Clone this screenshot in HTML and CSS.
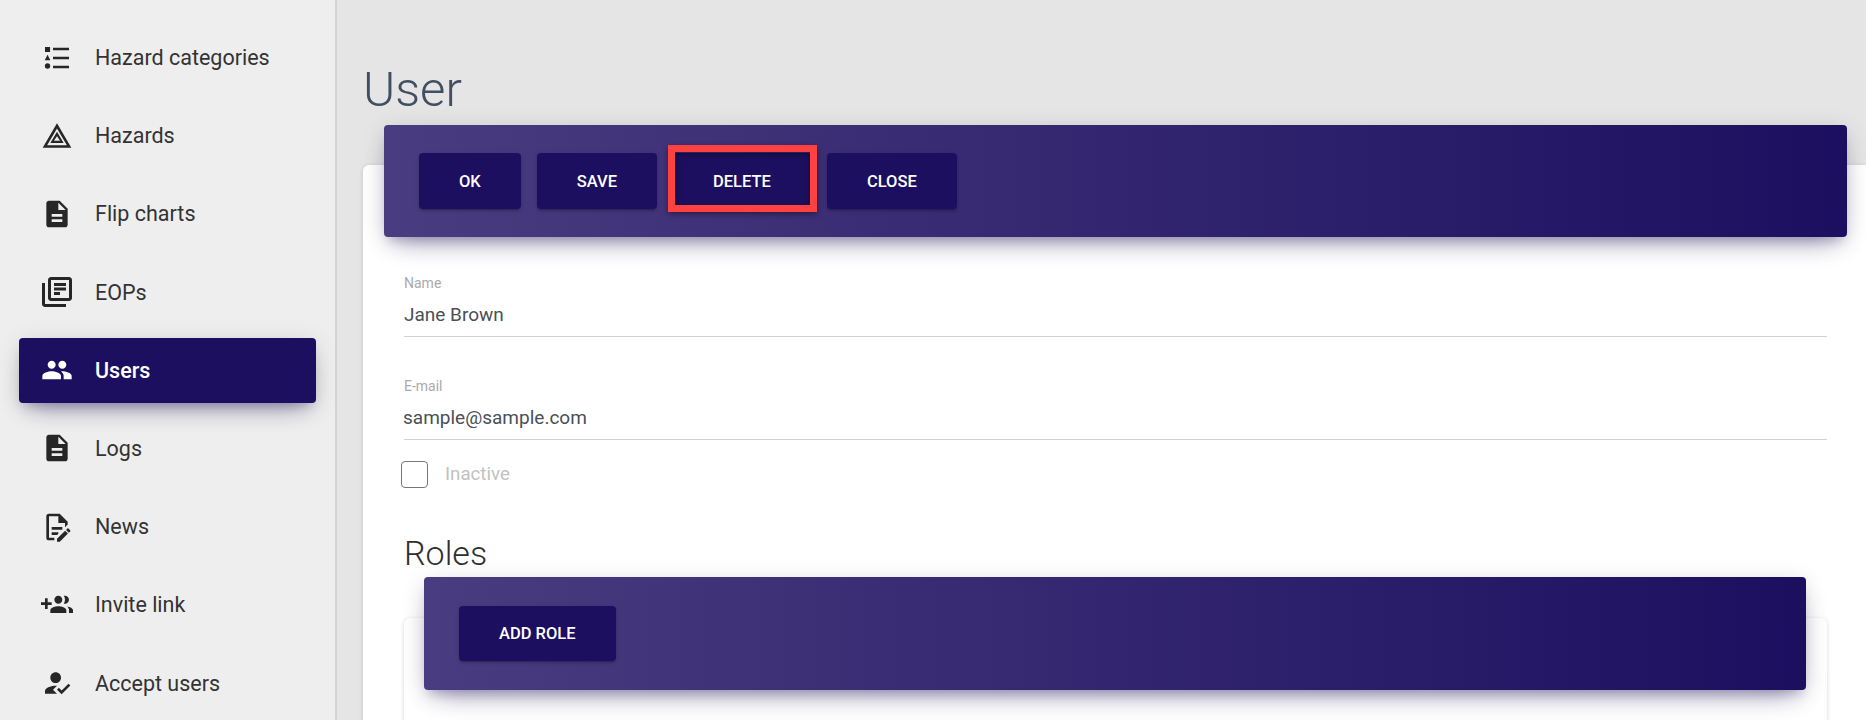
FILE: index.html
```html
<!DOCTYPE html>
<html lang="en">
<head>
<meta charset="utf-8">
<title>User</title>
<link rel="stylesheet" href="styles.css">
</head>
<body>
<div class="app">
  <aside class="sidebar">
    <nav class="nav">
      <a class="nav-item"><svg class="icon" viewBox="0 0 24 24"><path d="M3 3.750h3.800v3.800H3zM4.900 9.500l2.100 4.200H2.800zM4.900 16a2 2 0 1 1 0 4 2 2 0 0 1 0-4z"/><path d="M9 4.400h12v1.700H9zM9 11.150h12v1.700H9zM9 17.900h12v1.700H9z"/></svg><span>Hazard categories</span></a>
      <a class="nav-item"><svg class="icon" viewBox="0 0 24 24"><path fill-rule="evenodd" d="M12 2.500 1.250 20.800h21.500zM12 6.300 4.600 18.900h14.800zM12 8.900 7 17.200h10zM12 12.100l2.300 3.500H9.700z"/></svg><span>Hazards</span></a>
      <a class="nav-item"><svg class="icon" viewBox="0 0 24 24"><path d="M14 2H6c-1.100 0-1.990.900-1.990 2L4 20c0 1.100.890 2 1.990 2H18c1.100 0 2-.900 2-2V8l-6-6zm2 16H8v-2h8v2zm0-4H8v-2h8v2zm-3-5V3.500L18.500 9H13z"/></svg><span>Flip charts</span></a>
      <a class="nav-item"><svg class="icon icon-large" viewBox="0 0 24 24"><path d="M4 6H2v14c0 1.100.900 2 2 2h14v-2H4V6zm16-4H8c-1.100 0-2 .900-2 2v12c0 1.100.900 2 2 2h12c1.100 0 2-.900 2-2V4c0-1.100-.900-2-2-2zm0 14H8V4h12v12zM10 9h8v2h-8zm0 3h4v2h-4zm0-6h8v2h-8z"/></svg><span>EOPs</span></a>
      <a class="nav-item active"><svg class="icon" viewBox="0 0 24 24"><path d="M16 11c1.660 0 2.990-1.340 2.990-3S17.660 5 16 5c-1.660 0-3 1.340-3 3s1.340 3 3 3zm-8 0c1.660 0 2.990-1.340 2.990-3S9.660 5 8 5C6.340 5 5 6.340 5 8s1.340 3 3 3zm0 2c-2.330 0-7 1.170-7 3.500V19h14v-2.500c0-2.330-4.670-3.500-7-3.500zm8 0c-.290 0-.620.020-.970.050 1.160.840 1.970 1.970 1.970 3.450V19h6v-2.500c0-2.330-4.670-3.500-7-3.500z"/></svg><span>Users</span></a>
      <a class="nav-item"><svg class="icon" viewBox="0 0 24 24"><path d="M14 2H6c-1.100 0-1.990.900-1.990 2L4 20c0 1.100.890 2 1.990 2H18c1.100 0 2-.900 2-2V8l-6-6zm2 16H8v-2h8v2zm0-4H8v-2h8v2zm-3-5V3.500L18.500 9H13z"/></svg><span>Logs</span></a>
      <a class="nav-item"><svg class="icon" viewBox="0 0 24 24"><path d="M8,12H16V14H8V12M10,20H6V4H13V9H18V12.100L20,10.100V8L14,2H6A2,2 0 0,0 4,4V20A2,2 0 0,0 6,22H10V20M8,18H12.100L13,17.100V16H8V18M20.200,13C20.300,13 20.500,13.100 20.600,13.200L21.900,14.500C22.100,14.700 22.100,15.100 21.900,15.300L20.900,16.300L18.800,14.200L19.800,13.200C19.900,13.100 20,13 20.200,13M20.200,16.900L14.100,23H12V20.900L18.100,14.800L20.200,16.900Z"/></svg><span>News</span></a>
      <a class="nav-item"><svg class="icon" viewBox="0 0 24 24"><path d="M8 10H5V7H3v3H0v2h3v3h2v-3h3v-2zm10 1c1.660 0 2.990-1.340 2.990-3S19.660 5 18 5c-.320 0-.630.050-.910.140.570.810.900 1.790.900 2.860s-.340 2.040-.900 2.860c.280.090.590.140.910.140zm-5 0c1.660 0 2.990-1.340 2.990-3S14.660 5 13 5s-3 1.340-3 3 1.340 3 3 3zm6.620 2.160c.830.730 1.380 1.660 1.380 2.840v2h3v-2c0-1.540-2.370-2.490-4.380-2.840zM13 13c-2 0-6 1-6 3v2h12v-2c0-2-4-3-6-3z"/></svg><span>Invite link</span></a>
      <a class="nav-item"><svg class="icon" viewBox="0 0 24 24"><path d="M9 17l3-2.940c-.390-.040-.680-.060-1-.060-2.670 0-8 1.340-8 4v2h9l-3-3zm2-5c2.210 0 4-1.790 4-4s-1.790-4-4-4-4 1.790-4 4 1.790 4 4 4m4.470 8.500L12 17l1.400-1.410 2.070 2.070 5.130-5.170 1.400 1.410z"/></svg><span>Accept users</span></a>
    </nav>
  </aside>
  <main class="main">
    <h1 class="page-title">User</h1>
    <section class="card">
      <div class="toolbar toolbar-top">
        <button class="btn">OK</button>
        <button class="btn">SAVE</button>
        <button class="btn btn-marked">DELETE<span class="marker"></span></button>
        <button class="btn">CLOSE</button>
      </div>
      <div class="card-body">
        <div class="field">
          <label class="field-label">Name</label>
          <div class="field-value">Jane Brown</div>
        </div>
        <div class="field field-email">
          <label class="field-label">E-mail</label>
          <div class="field-value field-value-email">sample@sample.com</div>
        </div>
        <div class="check-row">
          <span class="checkbox"></span>
          <span class="check-label">Inactive</span>
        </div>
        <h2 class="section-title">Roles</h2>
        <section class="card inner-card">
          <div class="toolbar toolbar-inner">
            <button class="btn btn-role">ADD ROLE</button>
          </div>
        </section>
      </div>
    </section>
  </main>
</div>
</body>
</html>
```

FILE: styles.css
```css
* { box-sizing: border-box; }
html, body { margin: 0; height: 100%; overflow: hidden; }
body { font-family: Roboto, "Liberation Sans", sans-serif; background: #e5e5e5; }
.app { display: flex; height: 720px; overflow: hidden; }

.sidebar {
  width: 337px;
  flex: none;
  background: #eeeeee;
  border-right: 2px solid #d4d4d4;
  padding: 25px 19px 0;
}
.nav { display: flex; flex-direction: column; gap: 13.2px; }
.nav-item {
  display: flex;
  align-items: center;
  gap: 22px;
  height: 65px;
  padding-left: 22px;
  border-radius: 4px;
  color: #333;
  font-size: 21.5px;
  flex: none;
}
.nav-item .icon { width: 32px; height: 32px; fill: #262626; flex: none; }
.nav-item .icon-large { width: 36px; height: 36px; margin: 0 -2px; }
.nav-item.active {
  background: #1c0f5f;
  color: #fff;
  font-weight: 500;
  box-shadow: 0 14px 26px -12px rgba(28,15,95,.42), 0 4px 23px rgba(0,0,0,.12), 0 8px 10px -5px rgba(28,15,95,.2);
}
.nav-item.active .icon { fill: #fff; }

.main { flex: 1; min-width: 0; padding-left: 26px; }
.page-title {
  margin: 0;
  padding-top: 62px;
  height: 165px;
  font-size: 49px;
  line-height: 56px;
  font-weight: 300;
  color: #414f63;
}
.card {
  display: flow-root;
  background: #fff;
  border-radius: 6px 0 0 0;
  box-shadow: 0 1px 4px rgba(0,0,0,.16);
  min-height: 560px;
}
.toolbar {
  display: flex;
  align-items: center;
  gap: 16px;
  border-radius: 4px;
  background: linear-gradient(90deg, #4a3c80 0%, #1c0f5f 100%);
  box-shadow: 0 14px 26px -12px rgba(28,15,95,.42), 0 4px 23px rgba(0,0,0,.12), 0 8px 10px -5px rgba(28,15,95,.2);
}
.toolbar-top {
  height: 112px;
  margin: -40px 19px 0 21px;
  padding: 0 35px;
  position: relative;
}
.btn {
  height: 56px;
  padding: 0 40px;
  border: 0;
  border-radius: 4px;
  background: #1c0f5f;
  color: #fff;
  font-family: Roboto, "Liberation Sans", sans-serif;
  font-size: 16.500px;
  font-weight: 500;
  box-shadow: 0 2px 2px rgba(0,0,0,.14), 0 3px 1px -2px rgba(0,0,0,.12), 0 1px 5px rgba(0,0,0,.12);
}
.btn-marked { position: relative; }
.marker {
  position: absolute;
  left: -5px;
  right: -6px;
  top: -8px;
  bottom: -3px;
  border: 7px solid #ff4141;
  box-shadow: 0 2px 6px rgba(0,0,0,.4), inset 0 2px 6px rgba(0,0,0,.4);
}
.card-body { padding: 39px 39px 0 41px; }
.field { height: 61px; border-bottom: 1px solid #d2d2d2; }
.field-email { margin-top: 42px; }
.field-label { display: block; font-size: 14px; line-height: 14px; color: #aaa; }
.field-value { margin-top: 12px; font-size: 19px; line-height: 26px; color: #495057; }
.field-value-email { margin-left: -1px; }
.check-row { display: flex; align-items: center; margin: 20px 0 0 -3px; height: 28px; }
.checkbox { width: 27px; height: 27px; border: 1px solid #777; border-radius: 4px; background: #fff; flex: none; }
.check-label { margin-left: 17px; font-size: 18.700px; color: #c2c2c2; }
.section-title {
  margin: 45px 0 0;
  font-size: 34px;
  line-height: 40px;
  font-weight: 300;
  color: #2f2f2f;
}
.inner-card {
  margin-top: 45px;
  border-radius: 6px;
  min-height: 200px;
}
.toolbar-inner {
  height: 113px;
  margin: -41px 21px 0 20px;
  padding: 0 35px;
  position: relative;
}
.btn-role { height: 55px; }
```
